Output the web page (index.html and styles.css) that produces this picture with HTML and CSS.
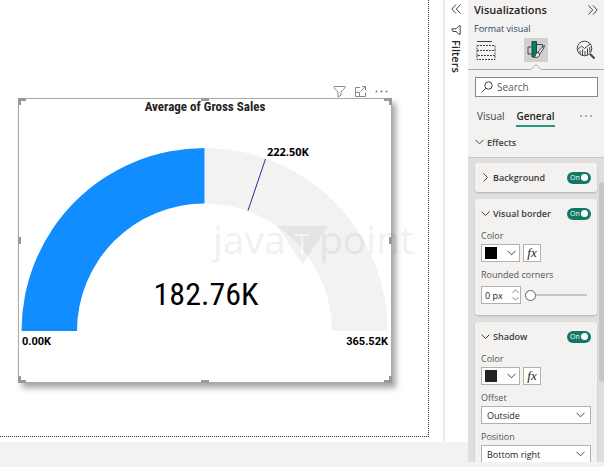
FILE: index.html
```html
<!DOCTYPE html>
<html lang="en">
<head>
  <meta charset="UTF-8">
  <meta name="viewport" content="width=device-width, initial-scale=1.0">
  <title>Average of Gross Sales</title>
  <link rel="stylesheet" href="styles.css">
</head>
<body>
  <main class="canvas">
    <div class="report-page">
      <div class="visual-tools">
        <button type="button" aria-label="Filters on this visual">
          <svg width="13" height="13" viewBox="0 0 13 13"><path d="M1 1.5h11v1.2L8 7v3.2L5 12V7L1 2.7z"/></svg>
        </button>
        <button type="button" aria-label="Focus mode">
          <svg width="13" height="13" viewBox="0 0 13 13"><path d="M6 2.500H1.500v9h10V7.500M1.500 7.500h4v4M6.500 6.500l5-5M8 1.500h3.500V5"/></svg>
        </button>
        <button type="button" aria-label="More options">
          <svg width="13" height="13" viewBox="0 0 13 13"><g class="dots"><circle cx="1.500" cy="6.500" r="1"/><circle cx="6.500" cy="6.500" r="1"/><circle cx="11.500" cy="6.500" r="1"/></g></svg>
        </button>
      </div>
      <section class="visual">
        <h2>Average of Gross Sales</h2>
        <svg class="gauge" viewBox="0 0 372 267" role="img" aria-label="Gauge">
          <path class="gauge-rest" d="M185.500 33A183 183 0 0 1 368.500 216H313A127.500 127.500 0 0 0 185.500 88.500z"/>
          <path class="gauge-fill" d="M2.500 216A183 183 0 0 1 185.500 33V88.500A127.500 127.500 0 0 0 58 216z"/>
          <path class="gauge-target" d="M246.500 44L229 95.500"/>
          <text class="target-label" x="248" y="41">222.50K</text>
          <text class="gauge-label" x="3" y="230">0.00K</text>
          <text class="gauge-label" x="369" y="230" text-anchor="end">365.52K</text>
          <text class="gauge-value" x="187" y="190" text-anchor="middle">182.76K</text>
          <g class="watermark">
            <text x="194" y="139">java</text>
            <path d="M258 111h51l-25.500 38z"/>
            <text class="watermark-t" x="283" y="139" text-anchor="middle">T</text>
            <text x="300" y="139">point</text>
          </g>
        </svg>
        <span class="handle top-left"></span>
        <span class="handle top"></span>
        <span class="handle top-right"></span>
        <span class="handle left"></span>
        <span class="handle right"></span>
        <span class="handle bottom-left"></span>
        <span class="handle bottom"></span>
        <span class="handle bottom-right"></span>
      </section>
    </div>
  </main>

  <aside class="filters">
    <button type="button" aria-label="Expand filters">
      <svg width="10" height="10" viewBox="0 0 10 10"><path d="M5 .5L.8 5 5 9.500M9.500.5L5.300 5l4.200 4.500"/></svg>
    </button>
    <svg width="10" height="10" viewBox="0 0 10 10"><path d="M9.200.8v8.400H8L5 6.500H2L.8 3.800H5L8 .8z"/></svg>
    <h2>Filters</h2>
  </aside>

  <footer class="status-bar"></footer>

  <aside class="panel">
    <header class="panel-title">
      <h1>Visualizations</h1>
      <button type="button" aria-label="Collapse pane">
        <svg width="10" height="10" viewBox="0 0 10 10"><path d="M.5.5L4.700 5 .5 9.500M5 .5L9.200 5 5 9.500"/></svg>
      </button>
    </header>
    <p class="subtitle">Format visual</p>
    <nav class="modes">
      <button type="button" aria-label="Build visual">
        <svg width="20" height="21" viewBox="0 0 20 21"><path d="M1 1.500h15"/><path stroke-dasharray="2 1" d="M1 5.500h18v5H1zM1 10.500v5h18v-5M1 15.500v4h18v-4"/></svg>
      </button>
      <button type="button" class="selected" aria-label="Format visual">
        <svg width="20" height="20" viewBox="0 0 20 20"><path d="M5.500 7H2v7h4M10.500 4.500h6V8"/><path class="brush-bar" d="M6 1.500h4.500V17H6z"/><path class="brush" d="M18.500 5.500c-3 2-5 4.500-6.500 7l1.700 1.500c2-2.500 4-5 4.800-8.500zM12 12.500c-1.800 0-2.200 1.500-2.400 2.800-.2 1-.9 1.500-1.700 1.700 2.600 1 5.600.2 5.800-3z"/></svg>
      </button>
      <button type="button" aria-label="Analytics">
        <svg width="20" height="20" viewBox="0 0 20 20"><circle cx="8.500" cy="8.500" r="7.300"/><path d="M1.500 9.500l4-3.500 3 2.500L14 4M4 14v-3.500M6.500 15.500V9.500M9 15.500V11M11.500 14.500V8.500M13.800 12V7"/><path class="thick" d="M14 14l4.500 4.500"/></svg>
      </button>
    </nav>
    <svg class="pointer" viewBox="0 0 136 6" preserveAspectRatio="none"><path d="M0 5.500H62.500L68 .7l5.500 4.800H136"/></svg>

    <label class="search">
      <svg width="12" height="12" viewBox="0 0 12 12"><circle cx="7.500" cy="4.500" r="3.700"/><path d="M4.800 7.200L.8 11.200"/></svg>
      <input type="text" placeholder="Search" aria-label="Search">
    </label>

    <div class="tabs">
      <button type="button">Visual</button>
      <button type="button" class="active">General</button>
      <button type="button" class="more" aria-label="More">
        <svg width="12" height="4" viewBox="0 0 12 4"><g class="dots"><circle cx="1" cy="2" r=".8"/><circle cx="6" cy="2" r=".8"/><circle cx="11" cy="2" r=".8"/></g></svg>
      </button>
    </div>

    <h3 class="section"><svg width="9" height="6" viewBox="0 0 9 6"><path d="M.5.8l4 4 4-4"/></svg>Effects</h3>

    <div class="cards">
      <section class="card">
        <header>
          <svg width="9" height="9" viewBox="0 0 9 9"><path d="M2.500.5l4 4-4 4"/></svg>
          <h4>Background</h4>
          <label class="toggle"><input type="checkbox" checked aria-label="Background">On</label>
        </header>
      </section>

      <section class="card">
        <header>
          <svg width="9" height="9" viewBox="0 0 9 9"><path d="M.5 2.500l4 4 4-4"/></svg>
          <h4>Visual border</h4>
          <label class="toggle"><input type="checkbox" checked aria-label="Visual border">On</label>
        </header>
        <div class="field">
          <label for="border-color">Color</label>
          <div class="row">
            <button type="button" class="color" id="border-color"><span class="swatch black"></span><svg width="9" height="6" viewBox="0 0 9 6"><path d="M.5.8l4 4 4-4"/></svg></button>
            <button type="button" class="fx">fx</button>
          </div>
        </div>
        <div class="field">
          <label for="corners">Rounded corners</label>
          <div class="row slider-row">
            <div class="spin">
              <input type="text" id="corners" value="0 px">
              <svg width="7" height="12" viewBox="0 0 7 12"><path d="M.5 3.800l3-3 3 3M.5 8.200l3 3 3-3"/></svg>
            </div>
            <input type="range" min="0" max="30" value="0" aria-label="Rounded corners">
          </div>
        </div>
      </section>

      <section class="card">
        <header>
          <svg width="9" height="9" viewBox="0 0 9 9"><path d="M.5 2.500l4 4 4-4"/></svg>
          <h4>Shadow</h4>
          <label class="toggle"><input type="checkbox" checked aria-label="Shadow">On</label>
        </header>
        <div class="field">
          <label for="shadow-color">Color</label>
          <div class="row">
            <button type="button" class="color" id="shadow-color"><span class="swatch"></span><svg width="9" height="6" viewBox="0 0 9 6"><path d="M.5.8l4 4 4-4"/></svg></button>
            <button type="button" class="fx">fx</button>
          </div>
        </div>
        <div class="field">
          <label for="offset">Offset</label>
          <div class="select">
            <select id="offset"><option>Outside</option><option>Inside</option></select>
            <svg width="9" height="6" viewBox="0 0 9 6"><path d="M.5.8l4 4 4-4"/></svg>
          </div>
        </div>
        <div class="field">
          <label for="position">Position</label>
          <div class="select">
            <select id="position"><option>Bottom right</option><option>Bottom</option></select>
            <svg width="9" height="6" viewBox="0 0 9 6"><path d="M.5.8l4 4 4-4"/></svg>
          </div>
        </div>
      </section>
      <span class="scroll-thumb"></span>
    </div>
  </aside>
</body>
</html>
```
FILE: styles.css
```css
* { box-sizing: border-box; }
body {
  margin: 0;
  height: 100vh;
  display: grid;
  grid-template-columns: 1fr 25px 136px;
  grid-template-rows: minmax(0, 1fr) 25px;
  overflow: hidden;
  background: #fff;
  color: #252423;
  font-family: "Open Sans", "Noto Sans", sans-serif;
  font-size: 9px;
}
h1, h2, h3, h4, p { margin: 0; }
button, input, select { font: inherit; color: inherit; margin: 0; padding: 0; border: 0; background: none; }
svg { display: block; flex: none; fill: none; stroke: #444; }
.dots { fill: #555; stroke: none; }

/* report canvas */
.canvas { display: flex; padding: 0 14px 5px 0; }
.report-page { flex: 1; padding: 84px 36px 0 18px; border: 1px dotted #333; border-width: 0 1px 1px 0; }
.visual-tools { display: flex; justify-content: flex-end; gap: 8px; height: 14px; padding-right: 4px; }
.visual-tools svg { stroke: #888; }
.visual-tools .dots { fill: #777; stroke: none; }
.visual { position: relative; border: 1px solid #aaa; box-shadow: 4px 5px 6px rgba(0, 0, 0, 0.35); background: #fff; }
.visual h2 { height: 16px; text-align: center; font: bold 13px/16px "Roboto Condensed", Roboto, sans-serif; }
.gauge { width: 100%; overflow: visible; stroke: none; }
.gauge text { fill: #000; }
.gauge-rest { fill: #f3f2f1; }
.gauge-fill { fill: #118dff; }
.gauge-target { stroke: #2230a0; }
.target-label { font-size: 11px; font-weight: bold; }
.gauge-label { font: bold 11px Roboto, sans-serif; }
.gauge-value { font: 32px "Roboto Condensed", Roboto, sans-serif; }
.watermark { fill: #000; opacity: 0.05; font-size: 39px; }
.gauge .watermark-t { fill: #fff; font-size: 28px; }

.handle { position: absolute; border: 0 solid #999; width: 8px; height: 7px; }
.top-left { top: -1px; left: -1px; border-width: 3px 0 0 3px; }
.top { top: -1px; left: 50%; border-top-width: 3px; margin-left: -4px; }
.top-right { top: -1px; right: -1px; border-width: 3px 3px 0 0; }
.left { top: 50%; left: -1px; border-left-width: 3px; margin-top: -4px; }
.right { top: 50%; right: -1px; border-right-width: 3px; margin-top: -4px; }
.bottom-left { bottom: -1px; left: -1px; border-width: 0 0 3px 3px; }
.bottom { bottom: -1px; left: 50%; border-bottom-width: 3px; margin-left: -4px; }
.bottom-right { bottom: -1px; right: -1px; border-width: 0 3px 3px 0; }

/* collapsed filters pane */
.filters { display: flex; flex-direction: column; align-items: center; padding: 4px 2px 0 0; border-left: 2px solid #eaeaea; }
.filters button { margin-bottom: 11px; }
.filters h2 { writing-mode: vertical-rl; font-size: 11px; line-height: 14px; font-weight: 600; margin-top: 5px; }
.status-bar { grid-row: 2; grid-column: 1 / 3; background: #f3f2f1; }

/* visualizations pane */
.panel { grid-row: 1 / 3; grid-column: 3; display: flex; flex-direction: column; min-height: 0; background: #f3f2f1; padding-bottom: 5px; }
.panel-title { display: flex; justify-content: space-between; align-items: center; height: 19px; padding: 0 6px; }
.panel-title h1 { font-size: 11px; font-weight: 600; }
.subtitle { padding: 0 6px; height: 19px; line-height: 19px; font-weight: 500; color: #2d4663; }
.modes { display: flex; justify-content: space-between; padding: 0 6px; height: 26px; }
.modes button { width: 24px; height: 24px; display: grid; place-items: center; }
.modes .selected { background: #d2d0ce; }
.brush-bar { fill: #0e7a66; stroke: #0b4f44; }
.brush { fill: #eee; }
.thick { stroke-width: 2; }
.pointer { width: 100%; height: 6px; stroke: #aaa; }
.search { display: flex; align-items: center; gap: 4px; height: 20px; margin: 7px 6px 0 7px; padding: 0 5px; border: 1px solid #8a8886; background: #fff; }
.search input { min-width: 0; flex: 1; font-size: 10px; outline: 0; }
.search input::placeholder { color: #555; opacity: 1; }
.tabs { display: flex; gap: 12px; height: 30px; padding: 9px 12px 0 9px; font-size: 10px; }
.tabs button { height: 21px; border-bottom: 2px solid transparent; color: #444; }
.tabs .active { font-weight: 600; border-color: #2b9583; color: #252423; }
.tabs .more { margin-left: auto; }
.section { display: flex; align-items: center; gap: 3px; height: 31px; padding-left: 7px; font-size: 9px; font-weight: 600; color: #444; border-bottom: 1px solid #c8c6c4; }
.cards { position: relative; flex: 1; min-height: 0; overflow: hidden; display: flex; flex-direction: column; gap: 7px; padding: 5px 7px 0; background: #e1dfdd; }
.card { flex: none; padding: 0 6px 8px; border-radius: 3px; background: #f3f2f1; box-shadow: 0 1px 2px rgba(0, 0, 0, 0.2); }
.card:first-child { padding-bottom: 0; }
.card header { display: flex; align-items: center; gap: 3px; height: 29px; }
.card h4 { flex: 1; font-size: 9px; font-weight: 600; color: #3b3a39; }
.toggle { display: flex; align-items: center; justify-content: space-between; width: 24px; height: 12px; padding: 0 3px; border-radius: 6px; background: #117865; color: #fff; font-size: 7px; }
.toggle input { appearance: none; order: 2; flex: none; width: 7px; height: 7px; border-radius: 50%; background: #fff; }
.field > label { display: block; height: 16px; line-height: 16px; color: #555; }
.field + .field { margin-top: 5px; }
.row { display: flex; align-items: center; gap: 3px; }
.slider-row { height: 24px; }
.color, .fx, .spin, .select { border: 1px solid #b3b0ad; background: #fff; height: 18px; }
.color { display: flex; align-items: center; justify-content: space-between; width: 39px; padding: 0 3px; }
.swatch { width: 12px; height: 12px; background: #252423; }
.black { background: #000; }
.fx { width: 18px; font: italic 13px/14px "Liberation Serif", serif; }
.spin { display: flex; align-items: center; width: 40px; padding: 0 1px 0 3px; }
.spin input { width: 0; flex: 1; }
.spin svg { stroke: #888; }
input[type="range"] { appearance: none; flex: 1; min-width: 0; height: 12px; margin: 0 4px 0 1px; background: linear-gradient(#c8c6c4, #c8c6c4) center / 100% 2px no-repeat; }
input[type="range"]::-webkit-slider-thumb { appearance: none; width: 11px; height: 11px; border: 1px solid #605e5c; border-radius: 50%; background: #fff; }
.select { display: grid; grid-template-columns: 1fr 9px; align-items: center; padding: 0 5px; }
.select select { appearance: none; grid-area: 1 / 1 / 2 / 3; }
.select svg { grid-area: 1 / 2; pointer-events: none; }
.scroll-thumb { position: absolute; top: 24px; right: 0; width: 5px; height: 200px; border-radius: 3px; background: #c8c6c4; }
```
